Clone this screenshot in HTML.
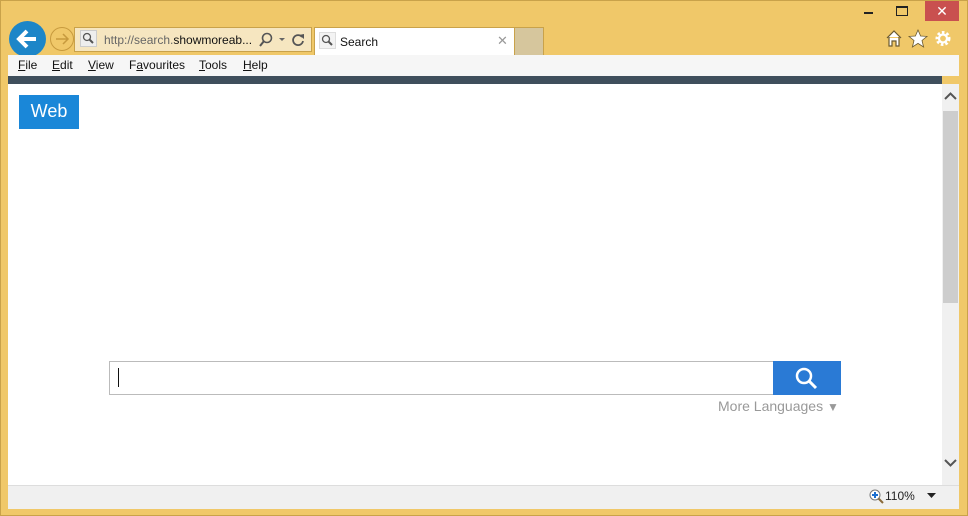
<!DOCTYPE html><html><head><style>
body{margin:0;width:968px;height:516px;background:#f0c869;position:relative;overflow:hidden;font-family:"Liberation Sans",sans-serif}
.a{position:absolute}
.m{position:absolute;top:0}
.m u{text-decoration:underline}
</style></head><body>
<div class="a" style="left:0;top:0;width:966px;height:514px;border:1px solid #c9a24a"></div>
<div class="a" style="left:864px;top:12px;width:9px;height:2px;background:#222"></div>
<div class="a" style="left:896px;top:6px;width:10px;height:7px;border:1px solid #222;border-top-width:2px"></div>
<div class="a" style="left:925px;top:1px;width:34px;height:20px;background:#c9504f;color:#fff;text-align:center;font-size:14px;line-height:20px">✕</div>
<svg class="a" style="left:884px;top:28px" width="70" height="22">
<path d="M3 10 L10 3 L17 10 M5 9 V18 H8 V13 H12 V18 H15 V9" fill="#fff" stroke="#6b5a30" stroke-width="1.2"/>
<path d="M34 2 L36.6 8 L43 8.4 L38 12.5 L39.6 19 L34 15.4 L28.4 19 L30 12.5 L25 8.4 L31.4 8 Z" fill="#fff" stroke="#6b5a30" stroke-width="0.8"/>
<circle cx="59" cy="10.5" r="6" fill="none" stroke="#fff" stroke-width="3" stroke-dasharray="2.5 2"/>
<circle cx="59" cy="10.5" r="4" fill="none" stroke="#fff" stroke-width="2.2"/>
</svg>
<div class="a" style="left:9px;top:21px;width:37px;height:36px;border-radius:50%;background:#1d86c8"></div>
<svg class="a" style="left:9px;top:21px" width="37" height="36"><path d="M27 18 H11 M18 10 L10 18 L18 26" fill="none" stroke="#fff" stroke-width="4"/></svg>
<div class="a" style="left:50px;top:27px;width:22px;height:22px;border-radius:50%;border:1px solid #c79a3e"></div>
<svg class="a" style="left:50px;top:27px" width="24" height="24"><path d="M6 12 H18 M13 7 L18 12 L13 17" fill="none" stroke="#c79a3e" stroke-width="1.5"/></svg>
<div class="a" style="left:74px;top:27px;width:236px;height:23px;background:#f6e6c0;border:1px solid #c9a24a"></div>
<svg class="a" style="left:80px;top:30px" width="18" height="18"><rect x="0.5" y="0.5" width="16" height="16" fill="#eee" stroke="#ccc"/><circle cx="7" cy="7" r="3.5" fill="none" stroke="#555" stroke-width="1.3"/><line x1="9.5" y1="9.5" x2="13" y2="13" stroke="#555" stroke-width="2"/></svg>
<div class="a" style="left:104px;top:33px;font-size:12px;color:#666">http://search.<span style="color:#111">showmoreab...</span></div>
<svg class="a" style="left:258px;top:31px" width="50" height="18"><circle cx="9" cy="7" r="4.5" fill="none" stroke="#555" stroke-width="1.6"/><line x1="6" y1="10" x2="2" y2="15" stroke="#555" stroke-width="2"/><path d="M21 7 L27 7 L24 10Z" fill="#666"/><path d="M44 6 A5 5 0 1 0 45 10" fill="none" stroke="#555" stroke-width="1.8"/><path d="M41 4 L46 3 L46 8Z" fill="#555"/></svg>
<div class="a" style="left:314px;top:27px;width:199px;height:28px;background:#fff;border:1px solid #c9a24a;border-bottom:none"></div>
<svg class="a" style="left:319px;top:32px" width="18" height="18"><rect x="0.5" y="0.5" width="16" height="16" fill="#f3f3f3" stroke="#ddd"/><circle cx="7" cy="7" r="3.5" fill="none" stroke="#555" stroke-width="1.3"/><line x1="9.5" y1="9.5" x2="13" y2="13" stroke="#555" stroke-width="2"/></svg>
<div class="a" style="left:340px;top:35px;font-size:12px;color:#111">Search</div>
<div class="a" style="left:497px;top:33px;font-size:13px;color:#999">✕</div>
<div class="a" style="left:514px;top:27px;width:28px;height:27px;background:#d6c69d;border:1px solid #c9a24a;border-bottom:none"></div>
<div class="a" style="left:8px;top:55px;width:951px;height:21px;background:#f6f6f6;font-size:12px;line-height:21px;color:#111">
<span class="m" style="left:10px"><u>F</u>ile</span><span class="m" style="left:44px"><u>E</u>dit</span><span class="m" style="left:80px"><u>V</u>iew</span><span class="m" style="left:121px">F<u>a</u>vourites</span><span class="m" style="left:191px"><u>T</u>ools</span><span class="m" style="left:235px"><u>H</u>elp</span></div>
<div class="a" style="left:8px;top:76px;width:934px;height:8px;background:#3f4f5c"></div>
<div class="a" style="left:8px;top:84px;width:934px;height:401px;background:#fff"></div>
<div class="a" style="left:942px;top:84px;width:17px;height:401px;background:#f0f0f0"></div>
<div class="a" style="left:943px;top:111px;width:15px;height:192px;background:#cdcdcd"></div>
<svg class="a" style="left:942px;top:90px" width="17" height="12"><path d="M3 9 L8.5 3.5 L14 9" fill="none" stroke="#555" stroke-width="2"/></svg>
<svg class="a" style="left:942px;top:457px" width="17" height="12"><path d="M3 3 L8.5 8.5 L14 3" fill="none" stroke="#555" stroke-width="2"/></svg>
<div class="a" style="left:8px;top:485px;width:951px;height:23px;background:#f0f0f0;border-top:1px solid #ddd"></div>
<svg class="a" style="left:869px;top:489px" width="16" height="16"><circle cx="6" cy="6" r="5" fill="#fff" stroke="#777"/><path d="M6 3 V9 M3 6 H9" stroke="#1d6fd0" stroke-width="2"/><line x1="9.5" y1="9.5" x2="14" y2="14" stroke="#8a6a3a" stroke-width="2"/></svg>
<div class="a" style="left:885px;top:489px;font-size:12px;color:#222">110%</div>
<svg class="a" style="left:927px;top:493px" width="10" height="6"><path d="M0 0 H9 L4.5 5Z" fill="#222"/></svg>
<div class="a" style="left:19px;top:95px;width:60px;height:34px;background:#1a87d8;color:#fff;font-size:18px;line-height:32px;text-align:center">Web</div>
<div class="a" style="left:109px;top:361px;width:663px;height:32px;border:1px solid #bbb;background:#fff"></div>
<div class="a" style="left:118px;top:368px;width:1px;height:19px;background:#111"></div>
<div class="a" style="left:773px;top:361px;width:68px;height:34px;background:#2a7ad5">
<svg width="68" height="34"><circle cx="31" cy="15" r="7" fill="none" stroke="#fff" stroke-width="2.5"/><line x1="36" y1="20" x2="43" y2="27" stroke="#fff" stroke-width="3"/></svg></div>
<div class="a" style="left:718px;top:398px;font-size:14px;color:#999">More Languages <span style="font-size:12px">▼</span></div>
</body></html>
